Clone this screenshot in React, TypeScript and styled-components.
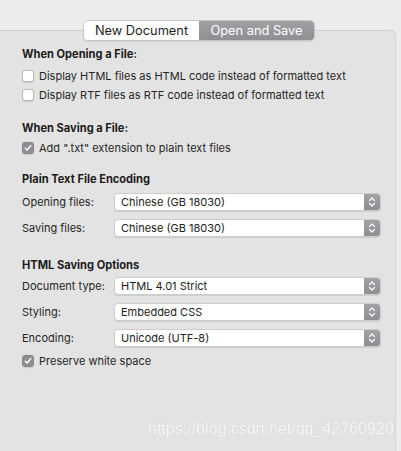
import React from 'react';
import styled, { createGlobalStyle } from 'styled-components';

const GlobalStyle = createGlobalStyle`
  html, body {
    margin: 0;
    padding: 0;
    background: #ececec;
  }
  * {
    box-sizing: border-box;
  }
`;

const Window = styled.div`
  position: relative;
  width: 401px;
  height: 451px;
  overflow: hidden;
  background: #ececec;
  padding-top: 30px;
  font-family: Inter, 'Liberation Sans', sans-serif;
  color: #262626;
  -webkit-font-smoothing: antialiased;
`;

const Panel = styled.div`
  margin-left: -1px;
  width: 397px;
  height: 440px;
  background: #e3e3e3;
  border: 1px solid #d3d3d3;
  border-top-color: #cfcfcf;
  border-radius: 0 5px 0 0;
  padding: 0 0 0 22px;
`;

const TabBar = styled.div`
  display: flex;
  width: 232px;
  height: 21px;
  margin: -11px 0 0 61px;
  border-radius: 5px;
  overflow: hidden;
  border: 1px solid #c6c6c6;
  box-shadow: 0 1px 1px rgba(0, 0, 0, 0.08);
`;

const Tab = styled.div<{ active?: boolean }>`
  flex: 1;
  display: flex;
  align-items: center;
  justify-content: center;
  font-size: 12.8px;
  color: ${({ active }) => (active ? '#ffffff' : '#1e1e1e')};
  background: ${({ active }) =>
    active ? 'linear-gradient(#a1a1a5, #8e8e93)' : '#ffffff'};
`;

const Section = styled.div<{ top: number }>`
  margin-top: ${({ top }) => top}px;
  display: flex;
  flex-direction: column;
`;

const Heading = styled.div<{ gap: number }>`
  height: 16px;
  line-height: 16px;
  font-size: 11.1px;
  font-weight: 700;
  color: #1c1c1c;
  margin-bottom: ${({ gap }) => gap}px;
`;

const CheckRow = styled.label`
  display: flex;
  align-items: center;
  gap: 5px;
  height: 19px;
  font-size: 11px;
`;

const Box = styled.span<{ checked?: boolean }>`
  width: 12px;
  height: 12px;
  border-radius: 3px;
  display: flex;
  align-items: center;
  justify-content: center;
  background: ${({ checked }) => (checked ? '#8e8e93' : '#ffffff')};
  border: 1px solid ${({ checked }) => (checked ? '#86868b' : '#b9b9b9')};
  box-shadow: 0 0.5px 1px rgba(0, 0, 0, 0.1);
`;

const SelectRow = styled.div`
  display: grid;
  grid-template-columns: 92px 267px;
  align-items: center;
  height: 26px;
  font-size: 11px;
`;

const Popup = styled.div`
  display: flex;
  align-items: center;
  height: 18px;
  background: #ffffff;
  border-radius: 4px;
  border: 1px solid #cdcdcd;
  box-shadow: 0 1px 1px rgba(0, 0, 0, 0.1);
  overflow: hidden;
`;

const PopupText = styled.span`
  flex: 1;
  padding-left: 6px;
  font-size: 11px;
  color: #222;
`;

const Stepper = styled.span`
  width: 16px;
  height: 100%;
  display: flex;
  align-items: center;
  justify-content: center;
  background: linear-gradient(#a2a2a7, #8e8e93);
`;

const Watermark = styled.div`
  position: absolute;
  left: 148px;
  top: 420px;
  font-family: 'Liberation Sans', Arial, sans-serif;
  font-size: 16px;
  color: rgba(255, 255, 255, 0.9);
  text-shadow: 0 0 1px rgba(0, 0, 0, 0.15);
`;

const Check = () => (
  <svg width="8" height="8" viewBox="0 0 8 8">
    <path d="M1.3 4.2 L3.2 6 L6.8 1.6" fill="none" stroke="#fff" strokeWidth="1.4" strokeLinecap="round" strokeLinejoin="round" />
  </svg>
);

const Chevrons = () => (
  <svg width="8" height="12" viewBox="0 0 8 12">
    <path d="M1.5 4.5 L4 2 L6.5 4.5 M1.5 7.5 L4 10 L6.5 7.5" fill="none" stroke="#fff" strokeWidth="1.2" strokeLinecap="round" strokeLinejoin="round" />
  </svg>
);

const Checkbox = ({ checked, label }: { checked?: boolean; label: string }) => (
  <CheckRow>
    <Box checked={checked}>{checked && <Check />}</Box>
    <span>{label}</span>
  </CheckRow>
);

const Select = ({ label, value }: { label: string; value: string }) => (
  <SelectRow>
    <span>{label}</span>
    <Popup>
      <PopupText>{value}</PopupText>
      <Stepper>
        <Chevrons />
      </Stepper>
    </Popup>
  </SelectRow>
);

export default function App() {
  return (
    <>
      <GlobalStyle />
      <Window>
        <Panel>
          <TabBar>
            <Tab>New Document</Tab>
            <Tab active>Open and Save</Tab>
          </TabBar>

          <Section top={5}>
            <Heading gap={4}>When Opening a File:</Heading>
            <Checkbox label="Display HTML files as HTML code instead of formatted text" />
            <Checkbox label="Display RTF files as RTF code instead of formatted text" />
          </Section>

          <Section top={16}>
            <Heading gap={2}>When Saving a File:</Heading>
            <Checkbox checked label={'Add ".txt" extension to plain text files'} />
          </Section>

          <Section top={14}>
            <Heading gap={2}>Plain Text File Encoding</Heading>
            <Select label="Opening files:" value="Chinese (GB 18030)" />
            <Select label="Saving files:" value="Chinese (GB 18030)" />
          </Section>

          <Section top={16}>
            <Heading gap={0}>HTML Saving Options</Heading>
            <Select label="Document type:" value="HTML 4.01 Strict" />
            <Select label="Styling:" value="Embedded CSS" />
            <Select label="Encoding:" value="Unicode (UTF-8)" />
            <Checkbox checked label="Preserve white space" />
          </Section>
        </Panel>
        <Watermark>https://blog.csdn.net/qq_42760920</Watermark>
      </Window>
    </>
  );
}
